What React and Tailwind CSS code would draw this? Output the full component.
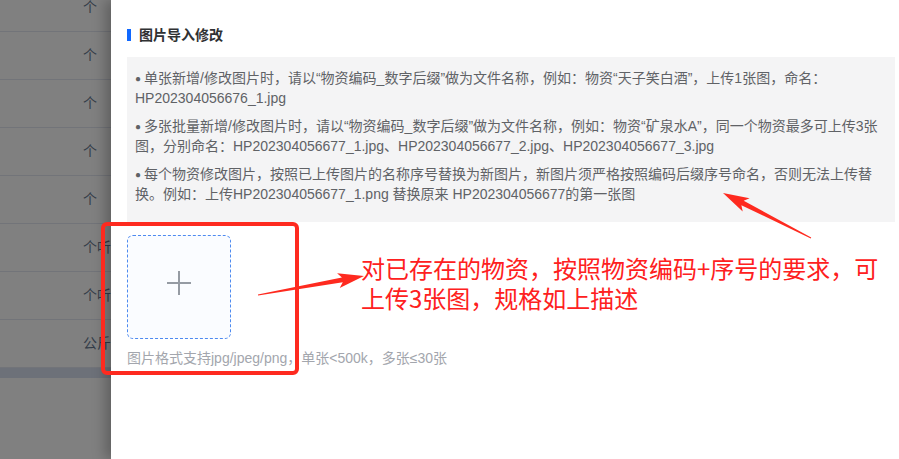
import React from "react";

const rows = ["个", "个", "个", "个", "个", "个听", "个听", "公斤"];

// each tip is laid out on the same two lines as the screenshot
const tips = [
  [
    "单张新增/修改图片时，请以“物资编码_数字后缀”做为文件名称，例如：物资“天子笑白酒”，上传1张图，命名：",
    "HP202304056676_1.jpg",
  ],
  [
    "多张批量新增/修改图片时，请以“物资编码_数字后缀”做为文件名称，例如：物资“矿泉水A”，同一个物资最多可上传3张",
    "图，分别命名：HP202304056677_1.jpg、HP202304056677_2.jpg、HP202304056677_3.jpg",
  ],
  [
    "每个物资修改图片，按照已上传图片的名称序号替换为新图片，新图片须严格按照编码后缀序号命名，否则无法上传替",
    "换。例如：上传HP202304056677_1.png 替换原来 HP202304056677的第一张图",
  ],
];

// tapered annotation arrow, tail -> tip
function arrowPoints(x1, y1, x2, y2, headLen = 22, headW = 15, shaftW = 5) {
  const dx = x2 - x1;
  const dy = y2 - y1;
  const len = Math.hypot(dx, dy);
  const ux = dx / len, uy = dy / len;
  const nx = -uy, ny = ux;
  const bx = x2 - ux * headLen, by = y2 - uy * headLen;
  const pts = [
    [x1 + nx * 0.5, y1 + ny * 0.5],
    [bx + nx * shaftW / 2, by + ny * shaftW / 2],
    [bx - ux * 4 + nx * headW / 2, by - uy * 4 + ny * headW / 2],
    [x2, y2],
    [bx - ux * 4 - nx * headW / 2, by - uy * 4 - ny * headW / 2],
    [bx - nx * shaftW / 2, by - ny * shaftW / 2],
    [x1 - nx * 0.5, y1 - ny * 0.5],
  ];
  return pts.map((p) => p.map((v) => v.toFixed(1)).join(",")).join(" ");
}

export default function App() {
  return (
    <div
      className="relative w-[899px] h-[459px] overflow-hidden flex bg-[#808080]"
      style={{ fontFamily: "'Liberation Sans', 'Noto Sans CJK SC', sans-serif" }}
    >
      {/* dimmed table behind the drawer */}
      <div className="w-[111px] shrink-0 flex flex-col -mt-4">
        {rows.map((r, i) => (
          <div
            key={i}
            className="h-12 shrink-0 flex items-center pl-[83px] border-b border-[#727479] text-[14px] text-[#333c48] whitespace-nowrap overflow-hidden"
          >
            {r}
          </div>
        ))}
        <div className="h-[10px] shrink-0 bg-[#6d7179]" />
      </div>

      {/* drawer */}
      <div className="flex-1 bg-white shadow-[-6px_0_12px_rgba(0,0,0,0.25)] pl-4 pr-1 pt-[28px]">
        <div className="flex items-center gap-2 h-[14px]">
          <span className="w-1 h-[12px] bg-[#1068ff]" />
          <span className="text-[14px] font-bold text-[#303133]">图片导入修改</span>
        </div>

        <div className="mt-[15px] bg-[#f4f4f5] pt-[11px] pb-[10px] px-2 text-[14px] leading-5 text-[#606266] whitespace-nowrap">
          {tips.map(([a, b], i) => (
            <p key={i} className="mb-2">
              <span className="text-[10px] leading-none relative -top-px mr-[3px]">●</span>
              {a}
              <br />
              {b}
            </p>
          ))}
        </div>

        <div className="mt-[13px] w-[104px] h-[104px] pb-2 rounded-md border border-dashed border-[#4d8af0] bg-[#fafcff] flex items-center justify-center">
          <svg width="24" height="24" viewBox="0 0 24 24">
            <path d="M12 0v24M0 12h24" stroke="#959ba3" strokeWidth="2" />
          </svg>
        </div>
        <p className="mt-[9px] text-[14px] leading-5 text-[#a3a6ad]">
          图片格式支持jpg/jpeg/png，单张&lt;500k，多张≤30张
        </p>
      </div>

      {/* annotations */}
      <div className="absolute left-[101px] top-[222px] w-[198px] h-[153px] rounded-md border-4 border-[#fe2a1f]" />
      <svg className="absolute inset-0 pointer-events-none" width="899" height="459">
        <polygon points={arrowPoints(258, 295, 364, 276, 22, 15, 5)} fill="#fe2a1f" />
        <polygon points={arrowPoints(811, 238, 723, 193, 22, 15, 5)} fill="#fe2a1f" />
      </svg>
      <div
        className="absolute left-[361px] top-[253px] text-[24px] leading-[30px] text-[#fe2020] whitespace-nowrap"
        style={{ fontFamily: "'Noto Sans CJK SC', sans-serif" }}
      >
        <div className="w-[517px] [text-align-last:justify]">对已存在的物资，按照物资编码+序号的要求，可</div>
        <div>上传3张图，规格如上描述</div>
      </div>
    </div>
  );
}
